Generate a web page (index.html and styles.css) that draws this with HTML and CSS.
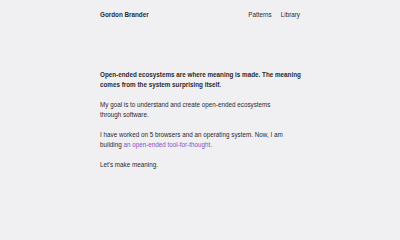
FILE: index.html
```html
<!DOCTYPE html>
<html lang="en">
<head>
<meta charset="utf-8">
<title>Gordon Brander</title>
<link rel="stylesheet" href="styles.css">
</head>
<body>
<div class="page">
  <header class="nav">
    <a class="brand" href="#">Gordon Brander</a>
    <nav class="links">
      <a href="#">Patterns</a>
      <a href="#">Library</a>
    </nav>
  </header>
  <main class="main">
    <p class="lead">Open-ended ecosystems are where meaning is made. The meaning<br>comes from the system surprising itself.</p>
    <p>My goal is to understand and create open-ended ecosystems<br>through software.</p>
    <p>I have worked on 5 browsers and an operating system. Now, I am<br>building <a class="accent" href="#">an open-ended tool-for-thought</a>.</p>
    <p>Let's make meaning.</p>
  </main>
</div>
</body>
</html>
```
FILE: styles.css
```css
html, body {
  margin: 0;
  padding: 0;
  background: #f0f0f3;
}
body {
  font-family: "Liberation Sans", Arial, sans-serif;
  font-size: 6.3px;
  line-height: 10px;
  color: #2a2a2e;
}
.page {
  width: 200px;
  margin: 0 auto;
}
.nav {
  display: flex;
  justify-content: space-between;
  padding-top: 10px;
}
.nav a {
  color: #2a2a2e;
  text-decoration: none;
}
.brand {
  font-weight: bold;
}
.links {
  display: flex;
  gap: 9px;
}
.main {
  padding-top: 50px;
}
.main p {
  margin: 0 0 10px;
  white-space: nowrap;
}
.lead {
  font-weight: bold;
}
.accent {
  color: #8a4fc0;
  text-decoration: none;
}
```
